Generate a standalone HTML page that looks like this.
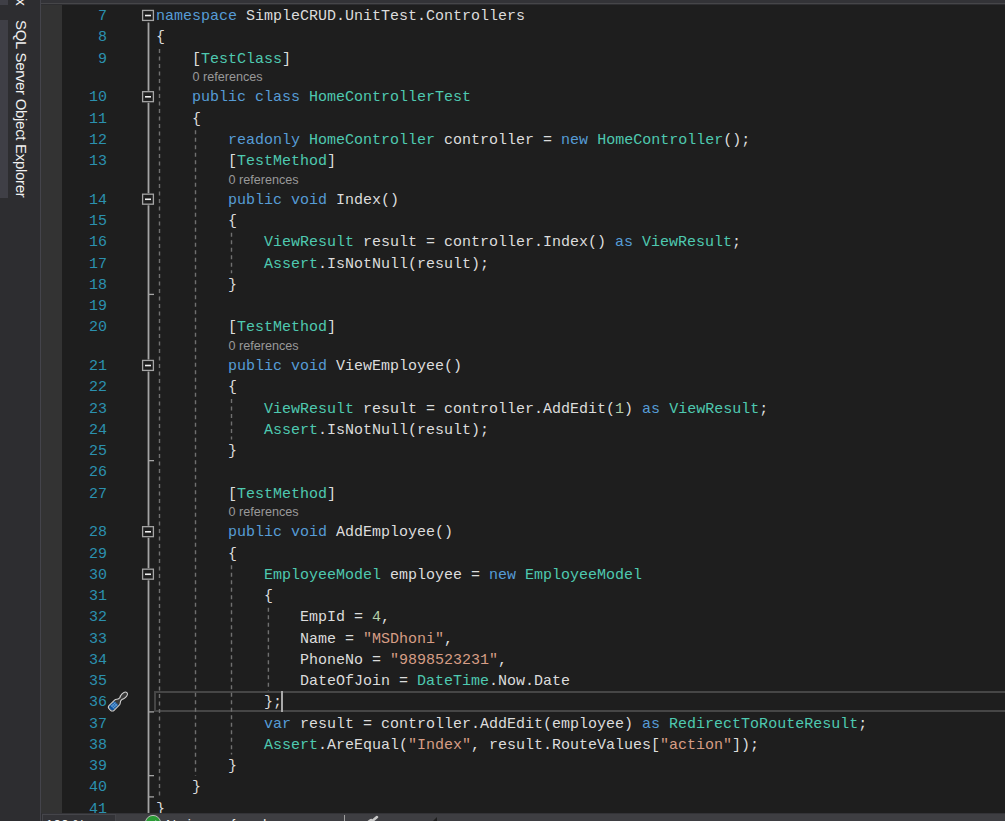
<!DOCTYPE html>
<html><head><meta charset="utf-8"><style>
html,body{margin:0;padding:0;}
body{width:1005px;height:821px;overflow:hidden;background:#1e1e1e;position:relative;font-family:"Liberation Mono",monospace;}
.a{position:absolute;}
.ln{position:absolute;left:60px;width:47px;text-align:right;color:#2b91af;font-size:15px;line-height:21px;white-space:pre;}
.cd{position:absolute;left:156px;color:#dcdcdc;font-size:15px;line-height:21px;white-space:pre;}
.lens{position:absolute;color:#999999;font-family:"Liberation Sans",sans-serif;font-size:12.6px;line-height:17px;white-space:pre;}
</style></head><body>

<div class="a" style="left:0;top:0;width:40px;height:821px;background:#2d2d30"></div>
<div class="a" style="left:0;top:0;width:8px;height:5px;background:#3f3f46"></div>
<div class="a" style="left:0;top:20px;width:8px;height:178px;background:#3f3f46"></div>
<div class="a" style="left:40px;top:0;width:1px;height:821px;background:#44444b"></div>
<div class="a" style="left:28.7px;top:20px;transform-origin:0 0;transform:rotate(90deg);font-family:'Liberation Sans',sans-serif;font-size:15px;letter-spacing:-0.3px;line-height:15px;color:#f1f1f1;white-space:nowrap">SQL Server Object Explorer</div>
<div class="a" style="left:28.7px;top:-46px;transform-origin:0 0;transform:rotate(90deg);font-family:'Liberation Sans',sans-serif;font-size:15px;line-height:15px;color:#f1f1f1;white-space:nowrap">Toolbox</div>
<div class="a" style="left:41px;top:0;width:964px;height:3px;background:#333337"></div>
<div class="a" style="left:41px;top:3px;width:964px;height:1px;background:#464649"></div>
<div class="a" style="left:41px;top:4px;width:964px;height:1px;background:#2d2d30"></div>
<div class="a" style="left:41px;top:5px;width:21px;height:808px;background:#333333"></div>
<div class="a" style="left:154px;top:691.15px;width:860px;height:17.25px;border:2px solid #464646;box-sizing:content-box"></div>
<svg class="a" style="left:0;top:0" width="1005" height="821">
<line x1="159.5" y1="48.90" x2="159.5" y2="796.90" stroke="#707070" stroke-width="1.4" stroke-dasharray="4 3.5"/>
<line x1="195.5" y1="130.15" x2="195.5" y2="775.65" stroke="#707070" stroke-width="1.4" stroke-dasharray="4 3.5"/>
<line x1="231.5" y1="232.65" x2="231.5" y2="273.15" stroke="#707070" stroke-width="1.4" stroke-dasharray="4 3.5"/>
<line x1="231.5" y1="398.90" x2="231.5" y2="439.40" stroke="#707070" stroke-width="1.4" stroke-dasharray="4 3.5"/>
<line x1="231.5" y1="565.15" x2="231.5" y2="754.40" stroke="#707070" stroke-width="1.4" stroke-dasharray="4 3.5"/>
<line x1="268.4" y1="607.65" x2="268.4" y2="690.65" stroke="#707070" stroke-width="1.4" stroke-dasharray="4 3.5"/>
<line x1="148.5" y1="22.52" x2="148.5" y2="90.78" stroke="#a5a5a5" stroke-width="1.8"/>
<line x1="148.5" y1="102.78" x2="148.5" y2="193.28" stroke="#a5a5a5" stroke-width="1.8"/>
<line x1="148.5" y1="205.28" x2="148.5" y2="359.52" stroke="#a5a5a5" stroke-width="1.8"/>
<line x1="148.5" y1="371.52" x2="148.5" y2="525.77" stroke="#a5a5a5" stroke-width="1.8"/>
<line x1="148.5" y1="537.77" x2="148.5" y2="568.27" stroke="#a5a5a5" stroke-width="1.8"/>
<line x1="148.5" y1="580.27" x2="148.5" y2="821" stroke="#a5a5a5" stroke-width="1.8"/>
<rect x="142.6" y="10.43" width="10.8" height="10" fill="#1e1e1e" stroke="#a5a5a5" stroke-width="1.3"/>
<line x1="145" y1="15.53" x2="151" y2="15.53" stroke="#f0f0f0" stroke-width="1.6"/>
<rect x="142.6" y="91.68" width="10.8" height="10" fill="#1e1e1e" stroke="#a5a5a5" stroke-width="1.3"/>
<line x1="145" y1="96.78" x2="151" y2="96.78" stroke="#f0f0f0" stroke-width="1.6"/>
<rect x="142.6" y="194.18" width="10.8" height="10" fill="#1e1e1e" stroke="#a5a5a5" stroke-width="1.3"/>
<line x1="145" y1="199.28" x2="151" y2="199.28" stroke="#f0f0f0" stroke-width="1.6"/>
<rect x="142.6" y="360.42" width="10.8" height="10" fill="#1e1e1e" stroke="#a5a5a5" stroke-width="1.3"/>
<line x1="145" y1="365.52" x2="151" y2="365.52" stroke="#f0f0f0" stroke-width="1.6"/>
<rect x="142.6" y="526.67" width="10.8" height="10" fill="#1e1e1e" stroke="#a5a5a5" stroke-width="1.3"/>
<line x1="145" y1="531.77" x2="151" y2="531.77" stroke="#f0f0f0" stroke-width="1.6"/>
<rect x="142.6" y="569.17" width="10.8" height="10" fill="#1e1e1e" stroke="#a5a5a5" stroke-width="1.3"/>
<line x1="145" y1="574.27" x2="151" y2="574.27" stroke="#f0f0f0" stroke-width="1.6"/>
<line x1="148.5" y1="294.40" x2="154" y2="294.40" stroke="#a5a5a5" stroke-width="1.3"/>
<line x1="148.5" y1="460.65" x2="154" y2="460.65" stroke="#a5a5a5" stroke-width="1.3"/>
<line x1="148.5" y1="711.90" x2="154" y2="711.90" stroke="#a5a5a5" stroke-width="1.3"/>
<line x1="148.5" y1="775.65" x2="154" y2="775.65" stroke="#a5a5a5" stroke-width="1.3"/>
<line x1="148.5" y1="796.90" x2="154" y2="796.90" stroke="#a5a5a5" stroke-width="1.3"/>
<line x1="148.5" y1="818.15" x2="154" y2="818.15" stroke="#a5a5a5" stroke-width="1.3"/>
</svg>
<div class="ln" style="top:6.20px">7</div>
<div class="cd" style="top:6.20px;left:156.0px"><span style="color:#569cd6">namespace</span> SimpleCRUD.UnitTest.Controllers</div>
<div class="ln" style="top:27.45px">8</div>
<div class="cd" style="top:27.45px;left:156.0px">{</div>
<div class="ln" style="top:48.70px">9</div>
<div class="cd" style="top:48.70px;left:192.0px">[<span style="color:#4ec9b0">TestClass</span>]</div>
<div class="ln" style="top:87.45px">10</div>
<div class="cd" style="top:87.45px;left:192.0px"><span style="color:#569cd6">public</span> <span style="color:#569cd6">class</span> <span style="color:#4ec9b0">HomeControllerTest</span></div>
<div class="ln" style="top:108.70px">11</div>
<div class="cd" style="top:108.70px;left:192.0px">{</div>
<div class="ln" style="top:129.95px">12</div>
<div class="cd" style="top:129.95px;left:228.0px"><span style="color:#569cd6">readonly</span> <span style="color:#4ec9b0">HomeController</span> controller = <span style="color:#569cd6">new</span> <span style="color:#4ec9b0">HomeController</span>();</div>
<div class="ln" style="top:151.20px">13</div>
<div class="cd" style="top:151.20px;left:228.0px">[<span style="color:#4ec9b0">TestMethod</span>]</div>
<div class="ln" style="top:189.95px">14</div>
<div class="cd" style="top:189.95px;left:228.0px"><span style="color:#569cd6">public</span> <span style="color:#569cd6">void</span> Index()</div>
<div class="ln" style="top:211.20px">15</div>
<div class="cd" style="top:211.20px;left:228.0px">{</div>
<div class="ln" style="top:232.45px">16</div>
<div class="cd" style="top:232.45px;left:264.0px"><span style="color:#4ec9b0">ViewResult</span> result = controller.Index() <span style="color:#569cd6">as</span> <span style="color:#4ec9b0">ViewResult</span>;</div>
<div class="ln" style="top:253.70px">17</div>
<div class="cd" style="top:253.70px;left:264.0px"><span style="color:#4ec9b0">Assert</span>.IsNotNull(result);</div>
<div class="ln" style="top:274.95px">18</div>
<div class="cd" style="top:274.95px;left:228.0px">}</div>
<div class="ln" style="top:296.20px">19</div>
<div class="ln" style="top:317.45px">20</div>
<div class="cd" style="top:317.45px;left:228.0px">[<span style="color:#4ec9b0">TestMethod</span>]</div>
<div class="ln" style="top:356.20px">21</div>
<div class="cd" style="top:356.20px;left:228.0px"><span style="color:#569cd6">public</span> <span style="color:#569cd6">void</span> ViewEmployee()</div>
<div class="ln" style="top:377.45px">22</div>
<div class="cd" style="top:377.45px;left:228.0px">{</div>
<div class="ln" style="top:398.70px">23</div>
<div class="cd" style="top:398.70px;left:264.0px"><span style="color:#4ec9b0">ViewResult</span> result = controller.AddEdit(<span style="color:#b5cea8">1</span>) <span style="color:#569cd6">as</span> <span style="color:#4ec9b0">ViewResult</span>;</div>
<div class="ln" style="top:419.95px">24</div>
<div class="cd" style="top:419.95px;left:264.0px"><span style="color:#4ec9b0">Assert</span>.IsNotNull(result);</div>
<div class="ln" style="top:441.20px">25</div>
<div class="cd" style="top:441.20px;left:228.0px">}</div>
<div class="ln" style="top:462.45px">26</div>
<div class="ln" style="top:483.70px">27</div>
<div class="cd" style="top:483.70px;left:228.0px">[<span style="color:#4ec9b0">TestMethod</span>]</div>
<div class="ln" style="top:522.45px">28</div>
<div class="cd" style="top:522.45px;left:228.0px"><span style="color:#569cd6">public</span> <span style="color:#569cd6">void</span> AddEmployee()</div>
<div class="ln" style="top:543.70px">29</div>
<div class="cd" style="top:543.70px;left:228.0px">{</div>
<div class="ln" style="top:564.95px">30</div>
<div class="cd" style="top:564.95px;left:264.0px"><span style="color:#4ec9b0">EmployeeModel</span> employee = <span style="color:#569cd6">new</span> <span style="color:#4ec9b0">EmployeeModel</span></div>
<div class="ln" style="top:586.20px">31</div>
<div class="cd" style="top:586.20px;left:264.0px">{</div>
<div class="ln" style="top:607.45px">32</div>
<div class="cd" style="top:607.45px;left:300.0px">EmpId = <span style="color:#b5cea8">4</span>,</div>
<div class="ln" style="top:628.70px">33</div>
<div class="cd" style="top:628.70px;left:300.0px">Name = <span style="color:#d69d85">&quot;MSDhoni&quot;</span>,</div>
<div class="ln" style="top:649.95px">34</div>
<div class="cd" style="top:649.95px;left:300.0px">PhoneNo = <span style="color:#d69d85">&quot;9898523231&quot;</span>,</div>
<div class="ln" style="top:671.20px">35</div>
<div class="cd" style="top:671.20px;left:300.0px">DateOfJoin = <span style="color:#4ec9b0">DateTime</span>.Now.Date</div>
<div class="ln" style="top:692.45px">36</div>
<div class="cd" style="top:692.45px;left:264.0px">};</div>
<div class="ln" style="top:713.70px">37</div>
<div class="cd" style="top:713.70px;left:264.0px"><span style="color:#569cd6">var</span> result = controller.AddEdit(employee) <span style="color:#569cd6">as</span> <span style="color:#4ec9b0">RedirectToRouteResult</span>;</div>
<div class="ln" style="top:734.95px">38</div>
<div class="cd" style="top:734.95px;left:264.0px"><span style="color:#4ec9b0">Assert</span>.AreEqual(<span style="color:#d69d85">&quot;Index&quot;</span>, result.RouteValues[<span style="color:#d69d85">&quot;action&quot;</span>]);</div>
<div class="ln" style="top:756.20px">39</div>
<div class="cd" style="top:756.20px;left:228.0px">}</div>
<div class="ln" style="top:777.45px">40</div>
<div class="cd" style="top:777.45px;left:192.0px">}</div>
<div class="ln" style="top:798.70px">41</div>
<div class="cd" style="top:798.70px;left:156.0px">}</div>
<div class="lens" style="top:69.15px;left:192.5px">0 references</div>
<div class="lens" style="top:171.65px;left:228.5px">0 references</div>
<div class="lens" style="top:337.90px;left:228.5px">0 references</div>
<div class="lens" style="top:504.15px;left:228.5px">0 references</div>
<div class="a" style="left:281.2px;top:691.25px;width:1.8px;height:20.25px;background:#a8a8a8"></div>
<svg class="a" style="left:104px;top:688px" width="28" height="26" viewBox="0 0 28 26">
<g transform="translate(5.9,21.6) rotate(-45) scale(0.96)">
<path d="M2.6,-3.6 L10.5,-3.6 C12.5,-3.6 13,-1.5 15,-1.5 L16.5,-1.5 C17.5,-2.5 18.5,-2.6 20.5,-2.6 C23.5,-2.6 25,-1.4 25,0 C25,1.4 23.5,2.6 20.5,2.6 C18.5,2.6 17.5,2.5 16.5,1.5 L15,1.5 C13,1.5 12.5,3.6 10.5,3.6 L2.6,3.6 A2.6 2.6 0 0 1 0,1 L0,-1 A2.6 2.6 0 0 1 2.6,-3.6 Z" fill="#3a3a3a" stroke="#d0d0d0" stroke-width="1.15"/>
<path d="M2.4,-2.8 L9.6,-2.8 L9.6,2.8 L2.4,2.8 A2 2 0 0 1 0.8,0.8 L0.8,-0.8 A2 2 0 0 1 2.4,-2.8 Z" fill="#1f66b0"/>
<path d="M4,-2.8 V2.8 M6,-2.8 V2.8 M8,-2.8 V2.8 M3,-1 H9.6 M3,1 H9.6" stroke="#7fb0e0" stroke-width="0.6"/>
<path d="M1.5,-2.5 L3,-2.5 L3,2.5 L1.5,2.5 Z" fill="#0d4f9a"/>
</g>
</svg>
<div class="a" style="left:41px;top:813px;width:964px;height:8px;background:#3e3e42"></div>
<div class="a" style="left:41px;top:812.6px;width:964px;height:1px;background:#333337"></div>
<div class="a" style="left:41px;top:813px;width:1px;height:8px;background:#2d2d30"></div>
<div class="a" style="left:42px;top:814px;width:72px;height:7px;background:#333337;border:1px solid #45454a;border-bottom:none"></div>
<div class="a" style="left:344px;top:815px;width:1px;height:6px;background:#a0a0a0"></div>
<svg class="a" style="left:362px;top:813px" width="20" height="8"><g transform="translate(9,9) rotate(-40)"><rect x="-6" y="-3" width="9" height="6" rx="2.5" fill="#c8c8c8"/><rect x="2" y="-1.3" width="7" height="2.6" rx="1.2" fill="#c8c8c8"/></g></svg>
<svg class="a" style="left:430px;top:816px" width="10" height="6"><path d="M2 6 L7 1 L7 6 Z" fill="#1e1e1e"/></svg>
<div class="a" style="left:45.5px;top:818px;font-family:'Liberation Sans',sans-serif;font-size:14px;line-height:15px;color:#f1f1f1;white-space:nowrap">100 %</div>
<div class="a" style="left:166px;top:818px;font-family:'Liberation Sans',sans-serif;font-size:14px;line-height:15px;color:#f1f1f1;white-space:nowrap">No issues found</div>
<svg class="a" style="left:144px;top:814px" width="18" height="18"><circle cx="9" cy="9" r="7.6" fill="#2a9a36" stroke="#c8c8c8" stroke-width="0.9"/><path d="M5.5 9.5 L8 12 L12.5 7" stroke="#f0f0f0" stroke-width="2" fill="none"/></svg>
</body></html>
